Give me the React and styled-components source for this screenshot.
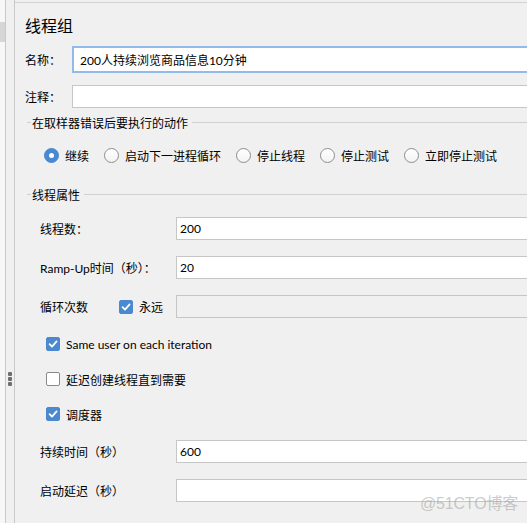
import React from "react";
import styled, { createGlobalStyle } from "styled-components";

const Global = createGlobalStyle`
  html, body { margin: 0; padding: 0; background: #f0f0f0; overflow: hidden; }
  body { font-family: "Lato", "Noto Sans CJK SC", sans-serif; font-size: 12px; color: #000; }
`;

const Frame = styled.div`
  position: relative;
  display: flex;
  width: 527px;
  height: 523px;
  overflow: hidden;
  background: #f0f0f0;
`;

const Tree = styled.div`
  width: 6px;
  flex: none;
  background: #f7f7f7;
  border-right: 1px solid #c9c9c9;
  padding-top: 22px;
  box-sizing: border-box;
`;

const TreeSelected = styled.div`
  height: 20px;
  background: #d6d6d6;
`;

const Splitter = styled.div`
  width: 9px;
  flex: none;
  box-sizing: border-box;
  border-right: 1px solid #c9c9c9;
  display: flex;
  flex-direction: column;
  align-items: center;
  gap: 1px;
  padding-top: 372px;
`;

const Dot = styled.span`
  width: 4px;
  height: 4px;
  border-radius: 1px;
  background: #6e6e6e;
`;

const Main = styled.div`
  flex: none;
  width: 560px;
  margin-top: 2px;
  border-top: 1px solid #d2d2d2;
  padding-left: 10px;
  display: flex;
  flex-direction: column;
`;

const Title = styled.div`
  height: 43px;
  display: flex;
  align-items: center;
  font-size: 16px;
  font-family: "Noto Sans CJK SC", sans-serif;
`;

const FieldRow = styled.div`
  display: flex;
  align-items: center;
  margin-top: ${(p) => p.$mt || 0}px;
  padding-left: ${(p) => p.$indent || 0}px;
`;

const Label = styled.span`
  width: ${(p) => p.$w}px;
  flex: none;
  white-space: nowrap;
`;

const TextInput = styled.div`
  flex: 1;
  box-sizing: border-box;
  height: ${(p) => (p.$focused ? 27 : 23)}px;
  border: ${(p) => (p.$focused ? "2px solid #92baea" : "1px solid #c6c6c6")};
  background: ${(p) => (p.$disabled ? "#f0f0f0" : "#fff")};
  display: flex;
  align-items: center;
  padding-left: ${(p) => (p.$focused ? 6 : 3)}px;
  white-space: nowrap;
`;

const GroupHeader = styled.div`
  display: flex;
  align-items: center;
  height: 16px;
  margin-top: ${(p) => p.$mt}px;
  padding-left: 2px;
`;

const Dash = styled.span`
  width: 4px;
  height: 1px;
  background: #d0d0d0;
  margin-right: 1px;
`;

const GroupLine = styled.span`
  flex: 1;
  height: 1px;
  background: #d0d0d0;
  margin-left: 4px;
`;

const RadioRow = styled.div`
  display: flex;
  align-items: center;
  height: 20px;
  margin-top: 15px;
  padding-left: 19px;
`;

const RadioItem = styled.label`
  display: flex;
  align-items: center;
  margin-right: 15px;
  white-space: nowrap;
`;

const RadioCircle = styled.span`
  width: 15px;
  height: 15px;
  box-sizing: border-box;
  border-radius: 50%;
  margin-right: 6px;
  flex: none;
  display: flex;
  align-items: center;
  justify-content: center;
  border: 1px solid ${(p) => (p.$on ? "#4a88d0" : "#8e8e8e")};
  background: ${(p) => (p.$on ? "#4a88d0" : "linear-gradient(#ffffff, #f3f3f3)")};
  &::after {
    content: "";
    display: ${(p) => (p.$on ? "block" : "none")};
    width: 5px;
    height: 5px;
    border-radius: 50%;
    background: #fff;
  }
`;

const CheckRow = styled.div`
  display: flex;
  align-items: center;
  height: 20px;
  margin-top: ${(p) => p.$mt}px;
  padding-left: 21px;
`;

const Box = styled.span`
  width: 14px;
  height: 14px;
  box-sizing: border-box;
  border-radius: 2px;
  flex: none;
  margin-right: 6px;
  display: flex;
  align-items: center;
  justify-content: center;
  border: 1px solid ${(p) => (p.$on ? "#4a88d0" : "#8a8a8a")};
  background: ${(p) => (p.$on ? "#4a88d0" : "#fff")};
`;

const InlineCheck = styled.label`
  display: flex;
  align-items: center;
  width: 57px;
  flex: none;
`;

const Watermark = styled.div`
  position: absolute;
  right: 9px;
  bottom: 9px;
  font-family: "Liberation Sans", "Noto Sans CJK SC", sans-serif;
  font-size: 16px;
  color: rgba(160, 160, 160, 0.55);
  letter-spacing: -0.2px;
`;

const Tick = () => (
  <svg width="10" height="10" viewBox="0 0 10 10">
    <path d="M1.6 5.2 L4 7.6 L8.6 2.4" fill="none" stroke="#fff" strokeWidth="1.8" strokeLinecap="round" strokeLinejoin="round" />
  </svg>
);

const Check = ({ on }) => <Box $on={on}>{on && <Tick />}</Box>;

const radios = ["继续", "启动下一进程循环", "停止线程", "停止测试", "立即停止测试"];

export default function App() {
  return (
    <>
      <Global />
      <Frame>
        <Tree>
          <TreeSelected />
        </Tree>
        <Splitter>
          <Dot />
          <Dot />
          <Dot />
        </Splitter>
        <Main>
          <Title>线程组</Title>
          <FieldRow>
            <Label $w={47}>名称：</Label>
            <TextInput $focused>200人持续浏览商品信息10分钟</TextInput>
          </FieldRow>
          <FieldRow $mt={12}>
            <Label $w={47}>注释：</Label>
            <TextInput />
          </FieldRow>

          <GroupHeader $mt={6}>
            <Dash />
            <span>在取样器错误后要执行的动作</span>
            <GroupLine />
          </GroupHeader>
          <RadioRow>
            {radios.map((r, i) => (
              <RadioItem key={r}>
                <RadioCircle $on={i === 0} />
                {r}
              </RadioItem>
            ))}
          </RadioRow>

          <GroupHeader $mt={21}>
            <Dash />
            <span>线程属性</span>
            <GroupLine />
          </GroupHeader>

          <FieldRow $mt={15} $indent={15}>
            <Label $w={136}>线程数：</Label>
            <TextInput>200</TextInput>
          </FieldRow>
          <FieldRow $mt={16} $indent={15}>
            <Label $w={136}>Ramp-Up时间（秒）：</Label>
            <TextInput>20</TextInput>
          </FieldRow>
          <FieldRow $mt={16} $indent={15}>
            <Label $w={79}>循环次数</Label>
            <InlineCheck>
              <Check on />
              永远
            </InlineCheck>
            <TextInput $disabled />
          </FieldRow>

          <CheckRow $mt={16}>
            <Check on />
            Same user on each iteration
          </CheckRow>
          <CheckRow $mt={15}>
            <Check />
            延迟创建线程直到需要
          </CheckRow>
          <CheckRow $mt={15}>
            <Check on />
            调度器
          </CheckRow>

          <FieldRow $mt={16} $indent={15}>
            <Label $w={136}>持续时间（秒）</Label>
            <TextInput>600</TextInput>
          </FieldRow>
          <FieldRow $mt={16} $indent={15}>
            <Label $w={136}>启动延迟（秒）</Label>
            <TextInput />
          </FieldRow>
        </Main>
        <Watermark>@51CTO博客</Watermark>
      </Frame>
    </>
  );
}
